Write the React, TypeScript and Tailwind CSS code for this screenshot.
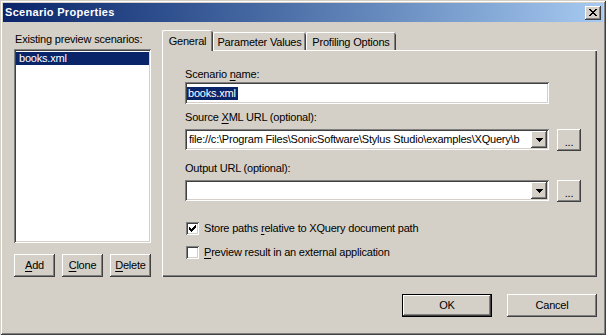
import React from "react";

const raised =
  "shadow-[inset_-1px_-1px_0_#404040,inset_1px_1px_0_#ffffff,inset_-2px_-2px_0_#808080]";
const sunken =
  "shadow-[inset_1px_1px_0_#808080,inset_-1px_-1px_0_#ffffff,inset_2px_2px_0_#404040,inset_-2px_-2px_0_#d4d0c8]";
const tab =
  "shadow-[inset_1px_0_0_#ffffff,inset_0_1px_0_#ffffff,inset_-1px_0_0_#404040,inset_-2px_0_0_#808080]";

function U({ children }: { children: React.ReactNode }) {
  return <span className="underline underline-offset-[2px]">{children}</span>;
}

function Button({
  children,
  className = "",
  isDefault = false,
}: {
  children: React.ReactNode;
  className?: string;
  isDefault?: boolean;
}) {
  return (
    <div
      className={
        "flex items-center justify-center bg-[#d4d0c8] " +
        (isDefault ? "border border-black " : "") +
        className
      }
    >
      <div className={"flex h-full w-full items-center justify-center " + raised}>{children}</div>
    </div>
  );
}

function Arrow() {
  return (
    <svg width="7" height="4" viewBox="0 0 7 4" shapeRendering="crispEdges">
      <rect x="0" y="0" width="7" height="1" fill="#000" />
      <rect x="1" y="1" width="5" height="1" fill="#000" />
      <rect x="2" y="2" width="3" height="1" fill="#000" />
      <rect x="3" y="3" width="1" height="1" fill="#000" />
    </svg>
  );
}

function Check() {
  const cols = [2, 3, 4, 3, 2, 1, 0];
  return (
    <svg width="7" height="7" viewBox="0 0 7 7" shapeRendering="crispEdges">
      {cols.map((y, x) => (
        <rect key={x} x={x} y={y} width="1" height="3" fill="#000" />
      ))}
    </svg>
  );
}

function CloseGlyph() {
  const rows = [0, 1, 2, 3, 4, 5, 6];
  return (
    <svg width="8" height="7" viewBox="0 0 8 7" shapeRendering="crispEdges">
      {rows.map((i) => (
        <React.Fragment key={i}>
          <rect x={i} y={i} width="2" height="1" fill="#000" />
          <rect x={6 - i} y={i} width="2" height="1" fill="#000" />
        </React.Fragment>
      ))}
    </svg>
  );
}

function Combo({ text }: { text: string }) {
  return (
    <div className="flex items-start gap-[8px]">
      <div className={"flex h-[21px] w-[364px] items-center bg-white p-[2px] " + sunken}>
        <div className="min-w-0 flex-1 overflow-hidden whitespace-nowrap pl-[2px]">{text}</div>
        <div className={"flex h-[17px] w-[16px] shrink-0 items-center justify-center bg-[#d4d0c8] " + raised}>
          <Arrow />
        </div>
      </div>
      <Button className="h-[22px] w-[24px]">
        <span className="pt-[4px] leading-[13px]">...</span>
      </Button>
    </div>
  );
}

function CheckRow({ checked, children }: { checked: boolean; children: React.ReactNode }) {
  return (
    <div className="flex h-[13px] items-center gap-[5px] pl-[1px]">
      <div className={"flex h-[13px] w-[13px] items-center justify-center bg-white " + sunken}>
        {checked && <Check />}
      </div>
      <span>{children}</span>
    </div>
  );
}

export default function App() {
  return (
    <div className="flex h-[335px] w-[606px] flex-col bg-[#d4d0c8] p-[3px] font-['Liberation_Sans',Arial,sans-serif] text-[11px] leading-[13px] tracking-[-0.2px] text-black shadow-[inset_1px_1px_0_#d4d0c8,inset_-1px_-1px_0_#404040,inset_2px_2px_0_#ffffff,inset_-2px_-2px_0_#808080]">
      {/* title bar */}
      <div className="flex h-[19px] items-center justify-between bg-linear-to-r from-[#0a246a] to-[#a6caf0] pl-[2px] pr-[2px]">
        <span className="font-bold tracking-[0.3px] text-white">Scenario Properties</span>
        <Button className="h-[14px] w-[16px]">
          <CloseGlyph />
        </Button>
      </div>

      <div className="flex items-start pl-[11px]">
        {/* scenarios list */}
        <div className="mt-[11px] flex w-[137px] flex-col">
          <div className="pl-[1px]">Existing preview scenarios:</div>
          <div className={"mt-[3px] h-[194px] bg-white px-[2px] pt-[3px] " + sunken}>
            <div className="h-[13px] bg-[#0a246a] pl-[3px] text-white">books.xml</div>
          </div>
          <div className="mt-[11px] flex gap-[7px]">
            <Button className="h-[23px] w-[41px]">
              <U>A</U>dd
            </Button>
            <Button className="h-[23px] w-[41px]">
              <U>C</U>lone
            </Button>
            <Button className="h-[23px] w-[41px]">
              <U>D</U>elete
            </Button>
          </div>
        </div>

        {/* tabs */}
        <div className="ml-[11px] mt-[8px] flex w-[435px] flex-col">
          <div className="relative z-10 flex h-[20px] items-end">
            <div className={"-mb-px flex h-[21px] w-[51px] justify-center rounded-t-[2px] bg-[#d4d0c8] pt-[5px] " + tab}>
              General
            </div>
            <div className={"flex h-[18px] w-[93px] justify-center whitespace-nowrap rounded-t-[2px] pt-[4px] " + tab}>
              Parameter Values
            </div>
            <div className={"flex h-[18px] w-[90px] justify-center whitespace-nowrap rounded-t-[2px] pt-[4px] " + tab}>
              Profiling Options
            </div>
          </div>
          <div className="flex h-[227px] flex-col pl-[23px] pt-[18px] shadow-[inset_1px_1px_0_#ffffff,inset_-1px_-1px_0_#404040,inset_-2px_-2px_0_#808080]">
            <div>
              Scenario <U>n</U>ame:
            </div>
            <div className={"mt-[1px] h-[22px] w-[364px] bg-white pl-[2px] pt-[5px] " + sunken}>
              <span className="inline-block h-[13px] bg-[#0a246a] pr-[2px] pl-px text-white">books.xml</span>
            </div>
            <div className="mt-[7px]">
              Source <U>X</U>ML URL (optional):
            </div>
            <div className="mt-[5px]">
              <Combo text={"file://c:\\Program Files\\SonicSoftware\\Stylus Studio\\examples\\XQuery\\b"} />
            </div>
            <div className="mt-[11px]">Output URL (optional):</div>
            <div className="mt-[5px]">
              <Combo text="" />
            </div>
            <div className="mt-[20px]">
              <CheckRow checked>
                Store paths <U>r</U>elative to XQuery document path
              </CheckRow>
            </div>
            <div className="mt-[11px]">
              <CheckRow checked={false}>
                <U>P</U>review result in an external application
              </CheckRow>
            </div>
          </div>
        </div>
      </div>

      {/* dialog buttons */}
      <div className="mt-[17px] flex justify-end gap-[15px] pr-[6px]">
        <Button isDefault className="h-[23px] w-[90px]">
          OK
        </Button>
        <Button className="h-[23px] w-[90px]">Cancel</Button>
      </div>
    </div>
  );
}
